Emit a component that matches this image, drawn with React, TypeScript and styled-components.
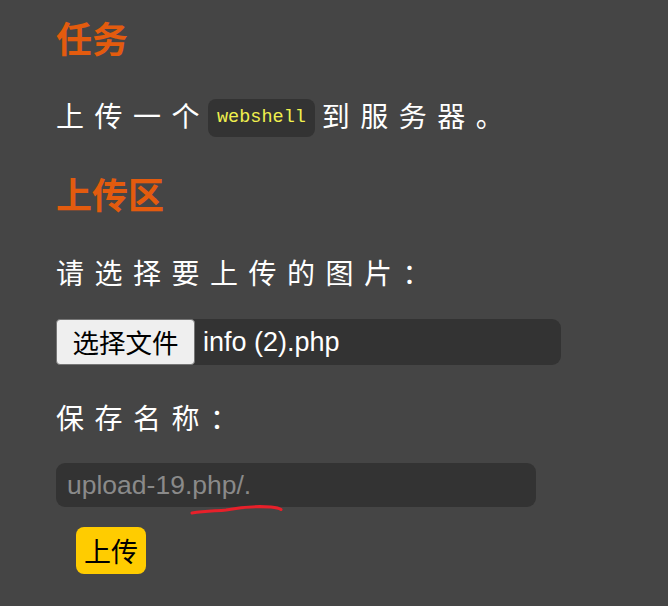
import React from "react";
import styled, { createGlobalStyle } from "styled-components";

const GlobalStyle = createGlobalStyle`
  html, body {
    margin: 0;
    padding: 0;
    background: #454545;
  }
  body {
    font-family: "Liberation Sans", "Noto Sans CJK SC", sans-serif;
    color: #ffffff;
  }
`;

const Page = styled.div`
  position: relative;
  width: 668px;
  height: 606px;
  box-sizing: border-box;
  padding: 17px 0 0 56px;
  display: flex;
  flex-direction: column;
  align-items: flex-start;
  overflow: hidden;
`;

const Heading = styled.h2<{ $top: number }>`
  margin: ${(p) => p.$top}px 0 0 0;
  font-family: "Noto Sans CJK SC", sans-serif;
  font-size: 36px;
  font-weight: 700;
  line-height: 40px;
  letter-spacing: 0;
  color: #e35b0e;
`;

const Text = styled.p<{ $top: number }>`
  margin: ${(p) => p.$top}px 0 0 0;
  font-family: "Noto Sans CJK SC", sans-serif;
  font-size: 28px;
  line-height: 38px;
  letter-spacing: 10.5px;
  height: 38px;
  display: flex;
  align-items: center;
  white-space: nowrap;
`;

const Code = styled.code`
  display: inline-block;
  box-sizing: border-box;
  height: 38px;
  padding: 0 9px;
  margin: 0 7px 0 -2px;
  border-radius: 8px;
  background: #333333;
  color: #f0f04e;
  font-family: "Liberation Mono", monospace;
  font-size: 18.5px;
  line-height: 38px;
  letter-spacing: 0;
  position: relative;
  top: 3px;
`;

const FileField = styled.div`
  margin-top: 28px;
  width: 505px;
  height: 46px;
  box-sizing: border-box;
  background: #333333;
  border-radius: 9px;
  display: flex;
  align-items: center;
`;

const FileButton = styled.button`
  height: 46px;
  width: 139px;
  box-sizing: border-box;
  margin: 0;
  padding: 0;
  background: #efefef;
  border: 1px solid #767676;
  border-radius: 4px;
  color: #000000;
  font-family: "Noto Sans CJK SC", sans-serif;
  font-size: 26.5px;
  line-height: 1;
`;

const FileName = styled.span`
  margin-left: 8px;
  color: #ffffff;
  font-family: "Liberation Sans", sans-serif;
  font-size: 27px;
`;

const InputWrap = styled.div`
  position: relative;
  margin-top: 27px;
`;

const NameInput = styled.input`
  display: block;
  width: 480px;
  height: 44px;
  box-sizing: border-box;
  padding: 0 11px;
  margin: 0;
  border: none;
  outline: none;
  border-radius: 9px;
  background: #333333;
  color: #8a8a8a;
  font-family: "Liberation Sans", sans-serif;
  font-size: 26.5px;
`;

const Scribble = styled.svg`
  position: absolute;
  left: 130px;
  top: 36px;
  overflow: visible;
`;

const SubmitButton = styled.button`
  margin: 20px 0 0 20px;
  width: 70px;
  height: 47px;
  box-sizing: border-box;
  padding: 0;
  border: none;
  border-radius: 8px;
  background: #ffcc00;
  color: #000000;
  font-family: "Noto Sans CJK SC", sans-serif;
  font-size: 27px;
  line-height: 1;
`;

export default function App() {
  return (
    <>
      <GlobalStyle />
      <Page>
        <Heading $top={0}>任务</Heading>
        <Text $top={39}>
          上传一个<Code>webshell</Code>到服务器。
        </Text>
        <Heading $top={39}>上传区</Heading>
        <Text $top={40}>请选择要上传的图片：</Text>
        <FileField>
          <FileButton type="button">选择文件</FileButton>
          <FileName>info (2).php</FileName>
        </FileField>
        <Text $top={33}>保存名称：</Text>
        <InputWrap>
          <NameInput type="text" defaultValue="upload-19.php/." readOnly />
          <Scribble width="100" height="20" viewBox="0 0 100 20">
            <path
              d="M6 14 C 20 12, 30 12, 40 11 C 55 8, 70 7, 85 8 C 90 8.5, 93 9, 95 10.5"
              fill="none"
              stroke="#e8202a"
              strokeWidth="3"
              strokeLinecap="round"
            />
          </Scribble>
        </InputWrap>
        <SubmitButton type="button">上传</SubmitButton>
      </Page>
    </>
  );
}
